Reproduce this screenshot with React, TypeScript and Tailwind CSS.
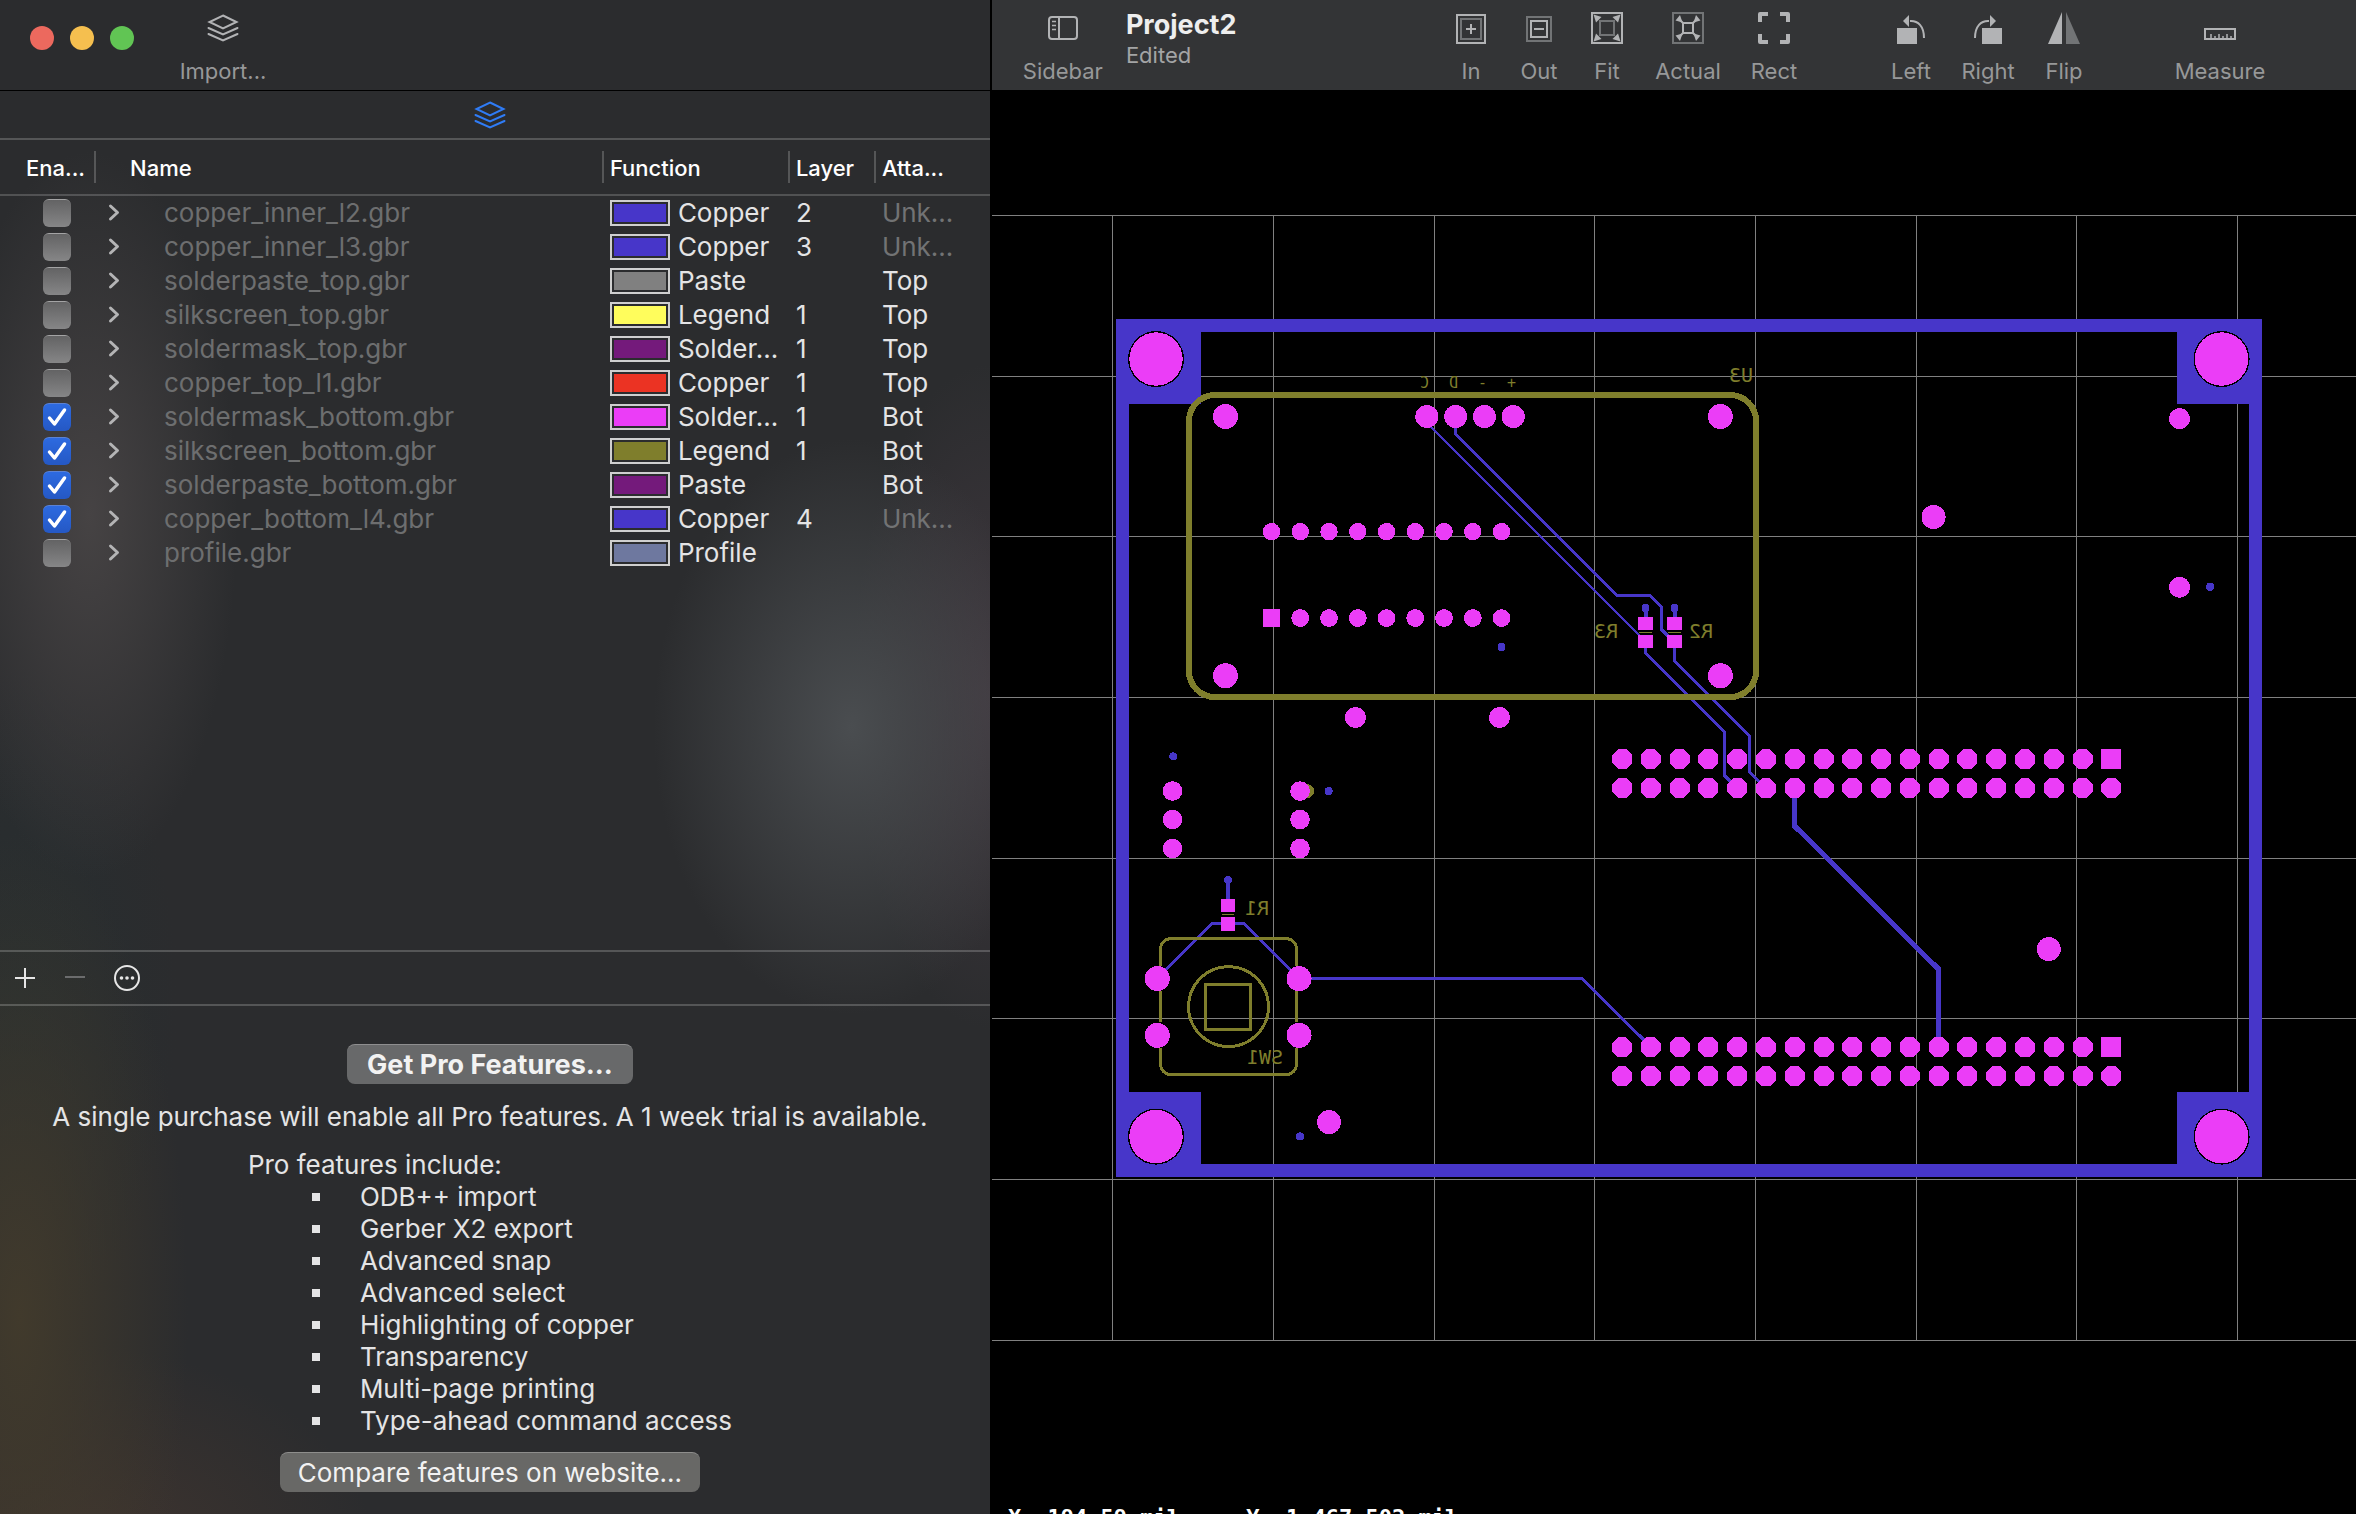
import React, { useState } from "react";

type Layer = {
  name: string;
  kind: string;
  swatch: string;
  layer: string;
  side: string;
  on: boolean;
};

const LAYERS: Layer[] = [
  { name: "copper_inner_l2.gbr", kind: "Copper", swatch: "bg-[#4736c9]", layer: "2", side: "Unk...", on: false },
  { name: "copper_inner_l3.gbr", kind: "Copper", swatch: "bg-[#4736c9]", layer: "3", side: "Unk...", on: false },
  { name: "solderpaste_top.gbr", kind: "Paste", swatch: "bg-[#808080]", layer: "", side: "Top", on: false },
  { name: "silkscreen_top.gbr", kind: "Legend", swatch: "bg-[#fffd5c]", layer: "1", side: "Top", on: false },
  { name: "soldermask_top.gbr", kind: "Solder...", swatch: "bg-[#741a7b]", layer: "1", side: "Top", on: false },
  { name: "copper_top_l1.gbr", kind: "Copper", swatch: "bg-[#eb3323]", layer: "1", side: "Top", on: false },
  { name: "soldermask_bottom.gbr", kind: "Solder...", swatch: "bg-[#eb3df7]", layer: "1", side: "Bot", on: true },
  { name: "silkscreen_bottom.gbr", kind: "Legend", swatch: "bg-[#7f7e2c]", layer: "1", side: "Bot", on: true },
  { name: "solderpaste_bottom.gbr", kind: "Paste", swatch: "bg-[#741a7b]", layer: "", side: "Bot", on: true },
  { name: "copper_bottom_l4.gbr", kind: "Copper", swatch: "bg-[#4736c9]", layer: "4", side: "Unk...", on: true },
  { name: "profile.gbr", kind: "Profile", swatch: "bg-[#6e789f]", layer: "", side: "", on: false },
];

const PRO_FEATURES = [
  "ODB++ import",
  "Gerber X2 export",
  "Advanced snap",
  "Advanced select",
  "Highlighting of copper",
  "Transparency",
  "Multi-page printing",
  "Type-ahead command access",
];

function LayersIcon() {
  return (
    <svg className="h-7 w-8" viewBox="0 0 32 28" fill="none" stroke="currentColor" strokeWidth="2" strokeLinecap="round">
      <path d="M16 1.5 29.5 8 16 14.5 2.5 8Z" />
      <path d="M1.5 14 16 20.5 30.5 14M1.5 20 16 26.5 30.5 20" />
    </svg>
  );
}

function SidebarIcon() {
  return (
    <svg className="h-6 w-[30px]" viewBox="0 0 30 24" fill="none" stroke="currentColor" strokeWidth="2">
      <rect x="1" y="1" width="28" height="22" rx="3" />
      <path d="M11 1V23" />
      <path d="M4 5.5H8M4 9.5H8M4 13.5H8" strokeWidth="1.5" />
    </svg>
  );
}

function ZoomInIcon() {
  return (
    <svg className="size-8" viewBox="0 0 32 32" fill="none" stroke="currentColor" strokeWidth="2">
      <rect x="2" y="3" width="28" height="28" />
      <rect x="6" y="7" width="20" height="20" opacity="0.5" />
      <path d="M16 12V22M11 17H21" />
    </svg>
  );
}

function ZoomOutIcon() {
  return (
    <svg className="size-8" viewBox="0 0 32 32" fill="none" stroke="currentColor" strokeWidth="2">
      <rect x="4" y="5" width="24" height="24" opacity="0.5" />
      <rect x="8" y="9" width="16" height="16" />
      <path d="M11 17H21" />
    </svg>
  );
}

function FitIcon() {
  return (
    <svg className="size-8" viewBox="0 0 32 32" fill="none" stroke="currentColor" strokeWidth="2">
      <rect x="1" y="1" width="30" height="30" />
      <rect x="9" y="9" width="14" height="14" opacity="0.5" />
      <g fill="currentColor" stroke="none">
        <path d="M2.5 2.5 10.5 5 5 10.5Z" />
        <path d="M29.5 2.5 21.5 5 27 10.5Z" />
        <path d="M2.5 29.5 10.5 27 5 21.5Z" />
        <path d="M29.5 29.5 21.5 27 27 21.5Z" />
      </g>
    </svg>
  );
}

function ActualIcon() {
  return (
    <svg className="size-8" viewBox="0 0 32 32" fill="none" stroke="currentColor" strokeWidth="2">
      <rect x="1" y="1" width="30" height="30" opacity="0.5" />
      <rect x="11" y="11" width="10" height="10" />
      <path d="M7 7 11 11M25 7 21 11M7 25 11 21M25 25 21 21" />
      <g fill="currentColor" stroke="none">
        <path d="M3.5 8.5 8 3 10.5 10.5Z" />
        <path d="M28.5 8.5 24 3 21.5 10.5Z" />
        <path d="M3.5 23.5 8 29 10.5 21.5Z" />
        <path d="M28.5 23.5 24 29 21.5 21.5Z" />
      </g>
    </svg>
  );
}

function RectIcon() {
  return (
    <svg className="size-8" viewBox="0 0 32 32" fill="none" stroke="currentColor" strokeWidth="4" strokeLinejoin="round">
      <path d="M2 10V2H10M22 2H30V10M30 22V30H22M10 30H2V22" />
    </svg>
  );
}

function RotateIcon({ flipped }: { flipped?: boolean }) {
  return (
    <svg className={flipped ? "size-8 -scale-x-100" : "size-8"} viewBox="0 0 32 32">
      <rect x="2" y="16" width="20" height="16" fill="currentColor" />
      <path d="M15 9C23 8.5 29 14 29 26" fill="none" stroke="currentColor" strokeWidth="2" />
      <path d="M8 9 14 3V15Z" fill="currentColor" />
    </svg>
  );
}

function FlipIcon() {
  return (
    <svg className="size-8" viewBox="0 0 32 32" fill="currentColor">
      <path d="M14 0V32H0Z" />
      <path d="M18 0V32H32Z" opacity="0.5" />
    </svg>
  );
}

function MeasureIcon() {
  return (
    <svg className="size-8" viewBox="0 0 32 32" fill="none" stroke="currentColor">
      <rect x="1" y="17" width="30" height="10" strokeWidth="2" />
      <path d="M7 27V22M11 27V24M15 27V22M19 27V24M23 27V22M27 27V24" strokeWidth="1.5" />
    </svg>
  );
}

function ToolButton({ label, width, children }: { label: string; width: string; children: React.ReactNode }) {
  return (
    <button type="button" className={`flex flex-col items-center gap-3 ${width} text-[#b2b3b5]`}>
      <span className="flex h-8 items-center">{children}</span>
      <span className="text-[22px] leading-[30px] text-[#979899]">{label}</span>
    </button>
  );
}

const COPPER = "#4736c9";
const MASK = "#eb3df7";
const SILK = "#7f7e2c";

function SilkText({ x, y, size = 20, children }: { x: number; y: number; size?: number; children: string }) {
  return (
    <text
      transform={`translate(${x} ${y}) scale(-1 1)`}
      fontFamily="'DejaVu Sans Mono', monospace"
      fontSize={size}
      fill={SILK}
    >
      {children}
    </text>
  );
}

function Board() {
  const gridX = [1112, 1273, 1434, 1594, 1755, 1916, 2076, 2237];
  const gridY = [215, 376, 536, 697, 858, 1018, 1179, 1340];
  const headerX = Array.from({ length: 18 }, (_, i) => 1622 + i * 28.78);
  const chipX = Array.from({ length: 9 }, (_, i) => 1271.5 + i * 28.75);
  const corners = [
    [1156, 359],
    [2221.5, 359],
    [1156, 1136.5],
    [2221.5, 1136.5],
  ];
  const vias = [
    [1501.5, 647],
    [1645.5, 608],
    [1674.5, 608],
    [1173.3, 756.3],
    [1328.7, 791],
    [1228, 880],
    [1300, 1136.3],
    [2210, 586.7],
  ];
  const pads = [
    [1225.4, 416.5, 12.5],
    [1720.3, 416.5, 12.5],
    [1225.4, 675.7, 12.5],
    [1720.3, 675.7, 12.5],
    [1426.8, 416.5, 11.5],
    [1455.6, 416.5, 11.5],
    [1484.4, 416.5, 11.5],
    [1513.2, 416.5, 11.5],
    [1355.5, 717.5, 10.5],
    [1499.5, 717.5, 10.5],
    [2048.7, 949, 12],
    [1933.5, 517, 12],
    [2179.5, 418.7, 10.5],
    [2179.5, 587.3, 10.5],
    [1172.5, 791, 9.8],
    [1172.5, 819.5, 9.8],
    [1172.5, 848.5, 9.8],
    [1300, 791, 9.8],
    [1300, 819.5, 9.8],
    [1300, 848.5, 9.8],
    [1157.3, 978.5, 12.5],
    [1299, 978.5, 12.5],
    [1157.3, 1035.3, 12.5],
    [1299, 1035.3, 12.5],
    [1329, 1122, 12],
  ];
  return (
    <svg
      className="block w-full"
      viewBox="992 90 1364 1424"
      preserveAspectRatio="xMinYMin meet"
      shapeRendering="crispEdges"
      role="img"
      aria-label="Board bottom view"
    >
      <g fill="#808080">
        {gridX.map((x) => (
          <rect key={x} x={x} y="215" width="1" height="1126" />
        ))}
        {gridY.map((y) => (
          <rect key={y} x="992" y={y} width="1364" height="1" />
        ))}
      </g>

      <g fill={COPPER}>
        <path fillRule="evenodd" d="M1116 319H2262V1177H1116ZM1129 404V1092H1201V1164H2177V1092H2249V404H2177V332H1201V404Z" />
        {vias.map(([x, y]) => (
          <circle key={`${x}-${y}`} cx={x} cy={y} r="4" />
        ))}
      </g>

      <g fill="none" stroke={COPPER} strokeWidth="3">
        <path d="M1427 422.800 1645 640.800" strokeWidth="2.500" />
        <path d="M1455.5 417V434L1617 595.5H1650L1661.5 607V629.5L1674 642" />
        <path d="M1645.5 642V653L1724 731.5V775L1737 788" />
        <path d="M1674.5 642V661L1749.5 736V772L1765.5 788" />
        <path d="M1299 978.5H1582L1651 1047" />
        <path d="M1157 978.5 1212 923.5H1244L1299 978.5" />
        <path d="M1794.5 788V826L1938.5 969V1047" strokeWidth="5" />
        <path d="M1228 880V900M1645.5 608V620M1674.5 608V620" strokeWidth="4" />
      </g>

      <g fill="none" stroke={SILK} strokeWidth="3">
        <rect x="1189" y="395" width="567" height="302" rx="26" strokeWidth="6" />
        <path d="M1160.5 966V949A10.5 10.5 0 0 1 1171 938.5H1286A10.5 10.5 0 0 1 1296.5 949V966" />
        <path d="M1160.5 991V1022M1296.5 991V1022" />
        <path d="M1160.5 1048V1064A10.5 10.5 0 0 0 1171 1074.5H1286A10.5 10.5 0 0 0 1296.5 1064V1048" />
        <circle cx="1228.5" cy="1006.5" r="40" />
        <rect x="1205.5" y="984.5" width="45" height="45" />
        <path d="M1639 632.5H1652M1668 632.5H1681M1222 914.5H1234" strokeWidth="1" />
      </g>
      <circle cx="1307" cy="791" r="7" fill={SILK} />

      <SilkText x={1753} y={382}>U3</SilkText>
      <SilkText x={1713} y={638}>R2</SilkText>
      <SilkText x={1618} y={638}>R3</SilkText>
      <SilkText x={1269} y={915}>R1</SilkText>
      <SilkText x={1283} y={1064}>SW1</SilkText>
      <SilkText x={1429} y={388} size={15}>C</SilkText>
      <SilkText x={1458} y={388} size={15}>D</SilkText>
      <SilkText x={1487} y={388} size={15}>-</SilkText>
      <SilkText x={1516} y={388} size={15}>+</SilkText>

      {corners.map(([x, y]) => (
        <g key={`${x}-${y}`}>
          <circle cx={x} cy={y} r="28" fill="#000" />
          <circle cx={x} cy={y} r="26.700" fill={MASK} />
        </g>
      ))}
      <g fill={MASK}>
        {pads.map(([x, y, r]) => (
          <circle key={`${x}-${y}`} cx={x} cy={y} r={r} />
        ))}
        {chipX.map((x) => (
          <circle key={x} cx={x} cy="531.6" r="8.7" />
        ))}
        {chipX.slice(1).map((x) => (
          <circle key={x} cx={x} cy="618" r="8.9" />
        ))}
        <rect x="1263" y="609" width="17" height="18" />
        {[759, 788, 1047, 1076].map((y, row) =>
          headerX.map((x, col) =>
            col === 17 && row % 2 === 0 ? (
              <rect key={`${x}-${y}`} x={x - 10} y={y - 10} width="20" height="20" />
            ) : (
              <path key={`${x}-${y}`} d={`M${x - 4} ${y - 10}h8l6 6v8l-6 6h-8l-6 -6v-8z`} />
            )
          )
        )}
        <path d="M1638 617h15v13h-15zM1638 635h15v13h-15zM1667 617h15v13h-15zM1667 635h15v13h-15z" />
        <path d="M1221 899h14v13h-14zM1221 917h14v14h-14z" />
      </g>
    </svg>
  );
}

function LayerTable() {
  const [rows, setRows] = useState(LAYERS);
  const toggle = (name: string) =>
    setRows((all) => all.map((r) => (r.name === name ? { ...r, on: !r.on } : r)));
  return (
    <table className="w-full table-fixed border-separate border-spacing-0 text-left">
      <colgroup>
        <col className="w-[96px]" />
        <col />
        <col className="w-[186px]" />
        <col className="w-[86px]" />
        <col className="w-[114px]" />
      </colgroup>
      <thead>
        <tr className="h-14 text-[22px] text-white">
          <th className="border-b-2 border-white/18 p-0 font-medium">
            <div className="flex h-8 items-center border-r-2 border-white/20 pt-0.5 pl-[26px]">Ena...</div>
          </th>
          <th className="border-b-2 border-white/18 p-0 font-medium">
            <div className="flex h-8 items-center border-r-2 border-white/20 pt-0.5 pl-[34px]">Name</div>
          </th>
          <th className="border-b-2 border-white/18 p-0 font-medium">
            <div className="flex h-8 items-center border-r-2 border-white/20 pt-0.5 pl-[6px]">Function</div>
          </th>
          <th className="border-b-2 border-white/18 p-0 font-medium">
            <div className="flex h-8 items-center border-r-2 border-white/20 pt-0.5 pl-[6px]">Layer</div>
          </th>
          <th className="border-b-2 border-white/18 p-0 font-medium">
            <div className="flex h-8 items-center pt-0.5 pl-[6px]">Atta...</div>
          </th>
        </tr>
      </thead>
      <tbody className="text-[26px] leading-8 text-[#e4e4e5]">
        {rows.map((r) => (
          <tr key={r.name} className="h-[34px]">
            <td className="p-0">
              <label className="relative ml-[43px] block size-7">
                <input
                  type="checkbox"
                  checked={r.on}
                  onChange={() => toggle(r.name)}
                  aria-label={`Enable ${r.name}`}
                  className="peer block size-7 appearance-none rounded-md border-t border-white/25 bg-linear-to-b from-[#636364] to-[#868687] checked:from-[#2d6ae0] checked:to-[#2558c4]"
                />
                <svg
                  className="pointer-events-none absolute inset-0 hidden size-7 peer-checked:block"
                  viewBox="0 0 28 28"
                  fill="none"
                  stroke="#fff"
                  strokeWidth="3.5"
                  strokeLinecap="round"
                  strokeLinejoin="round"
                >
                  <path d="M6.5 15 11.5 21 21.5 7" />
                </svg>
              </label>
            </td>
            <td className="p-0">
              <div className="flex items-center pl-3">
                <button type="button" aria-label={`Expand ${r.name}`} className="mr-11 text-[#b4b4b5]">
                  <svg className="h-5 w-3" viewBox="0 0 12 20" fill="none" stroke="currentColor" strokeWidth="3" strokeLinecap="round" strokeLinejoin="round">
                    <path d="M2.5 3 9.5 9.5 2.5 16" />
                  </svg>
                </button>
                <span className="truncate text-[#6d6e6f]">{r.name}</span>
              </div>
            </td>
            <td className="p-0">
              <div className="flex items-center gap-2 pl-[6px]">
                <span className="h-[26px] w-[60px] shrink-0 border-2 border-[#cfcfcf] p-[2px]">
                  <span className={`block h-full w-full ${r.swatch}`} />
                </span>
                <span>{r.kind}</span>
              </div>
            </td>
            <td className="p-0 pl-[6px]">{r.layer}</td>
            <td className={r.side === "Unk..." ? "p-0 pl-[6px] text-[#727374]" : "p-0 pl-[6px]"}>{r.side}</td>
          </tr>
        ))}
      </tbody>
    </table>
  );
}

export default function App() {
  return (
    <div className="flex h-screen overflow-hidden bg-black font-['Inter','Liberation_Sans',sans-serif]">
      <aside className="flex w-[42.1%] shrink-0 flex-col border-r-2 border-black bg-[#2b2c2e] bg-[radial-gradient(ellipse_15%_24%_at_9%_34%,#464344_0%,#46434400_100%),radial-gradient(ellipse_20%_19%_at_86%_48%,#4a4d50_0%,#4a4d5000_100%),radial-gradient(ellipse_14%_22%_at_100%_46%,#40383f_0%,#40383f00_100%),radial-gradient(ellipse_17%_32%_at_2%_87%,#413a2c_0%,#413a2c00_100%),radial-gradient(ellipse_30%_14%_at_8%_103%,#40352f_0%,#40352f00_100%),radial-gradient(ellipse_16%_22%_at_2%_66%,#272e30_0%,#272e3000_100%)]">
        <header className="flex h-[91px] shrink-0 items-start border-b border-black">
          <div className="flex gap-4 pt-[26px] pl-[30px]">
            <button type="button" aria-label="Close" className="size-6 rounded-full bg-[#ec695e]" />
            <button type="button" aria-label="Minimize" className="size-6 rounded-full bg-[#f5bf4f]" />
            <button type="button" aria-label="Zoom" className="size-6 rounded-full bg-[#61c554]" />
          </div>
          <div className="ml-10 pt-3">
            <ToolButton label="Import..." width="w-[98px]">
              <LayersIcon />
            </ToolButton>
          </div>
        </header>

        <nav className="flex h-[49px] shrink-0 items-center justify-center border-b-2 border-white/20 pr-2.5">
          <button type="button" aria-label="Layers" className="text-[#2f7cf6]">
            <LayersIcon />
          </button>
        </nav>

        <div className="min-h-0 flex-1 overflow-hidden">
          <LayerTable />
        </div>

        <div className="flex h-14 shrink-0 items-center border-y-2 border-white/20 pl-[14px]">
          <button type="button" aria-label="Add layer" className="text-[#e6e6e6]">
            <svg className="size-[22px]" viewBox="0 0 22 22" stroke="currentColor" strokeWidth="2">
              <path d="M11 1V21M1 11H21" />
            </svg>
          </button>
          <button type="button" aria-label="Remove layer" className="ml-7 text-[#6b6c6d]">
            <svg className="size-[22px]" viewBox="0 0 22 22" stroke="currentColor" strokeWidth="2">
              <path d="M1 10H21" />
            </svg>
          </button>
          <button type="button" aria-label="More actions" className="ml-7 text-[#e6e6e6]">
            <svg className="size-[26px]" viewBox="0 0 26 26">
              <circle cx="13" cy="13" r="12" fill="none" stroke="currentColor" strokeWidth="2" />
              <g fill="currentColor">
                <circle cx="7.5" cy="13" r="1.8" />
                <circle cx="13" cy="13" r="1.8" />
                <circle cx="18.5" cy="13" r="1.8" />
              </g>
            </svg>
          </button>
        </div>

        <section className="flex shrink-0 flex-col items-center pt-[38px] pr-2.5 pb-[22px] text-[26px] leading-8 text-[#e4e4e5]">
          <button type="button" className="h-10 rounded-lg border-t border-white/25 bg-[#68696a] px-5 text-[27px] font-bold text-[#f2f2f2]">
            Get Pro Features...
          </button>
          <p className="mt-[17px]">A single purchase will enable all Pro features. A 1 week trial is available.</p>
          <div className="mt-4">
            <p>Pro features include:</p>
            <ul>
              {PRO_FEATURES.map((f) => (
                <li key={f} className="flex items-center pl-16">
                  <span className="mr-10 size-2 bg-[#e4e4e5]" />
                  {f}
                </li>
              ))}
            </ul>
          </div>
          <button type="button" className="mt-[15px] h-10 rounded-lg border-t border-white/25 bg-[#686866] px-[18px] text-[#f2f2f2]">
            Compare features on website...
          </button>
        </section>
      </aside>

      <main className="flex min-w-0 flex-1 flex-col">
        <header className="flex h-[90px] shrink-0 items-start bg-[#333436] pl-7">
          <div className="pt-3">
            <ToolButton label="Sidebar" width="w-[86px]">
              <SidebarIcon />
            </ToolButton>
          </div>
          <div className="ml-5 pt-[9px]">
            <h1 className="text-[27px] leading-8 font-bold text-[#eeeeee]">Project2</h1>
            <p className="text-[22px] leading-7 text-[#a3a4a5]">Edited</p>
          </div>
          <div className="ml-auto flex pt-3 pr-[88px]">
            <ToolButton label="In" width="w-[68px]"><ZoomInIcon /></ToolButton>
            <ToolButton label="Out" width="w-[68px]"><ZoomOutIcon /></ToolButton>
            <ToolButton label="Fit" width="w-[68px]"><FitIcon /></ToolButton>
            <ToolButton label="Actual" width="w-[94px]"><ActualIcon /></ToolButton>
            <ToolButton label="Rect" width="w-[78px]"><RectIcon /></ToolButton>
            <div className="ml-[59px] flex">
              <ToolButton label="Left" width="w-[78px]"><RotateIcon /></ToolButton>
              <ToolButton label="Right" width="w-[76px]"><RotateIcon flipped /></ToolButton>
              <ToolButton label="Flip" width="w-[76px]"><FlipIcon /></ToolButton>
            </div>
            <div className="ml-[70px]">
              <ToolButton label="Measure" width="w-[96px]"><MeasureIcon /></ToolButton>
            </div>
          </div>
        </header>
        <div className="min-h-0 flex-1 overflow-hidden bg-black">
          <Board />
        </div>
        <footer className="h-2.5 shrink-0 overflow-hidden bg-black pl-4 font-['DejaVu_Sans_Mono',monospace] text-[22px] leading-7 font-bold whitespace-pre text-white">
          {"X: 194.59 mil     Y: 1,467.502 mil"}
        </footer>
      </main>
    </div>
  );
}
